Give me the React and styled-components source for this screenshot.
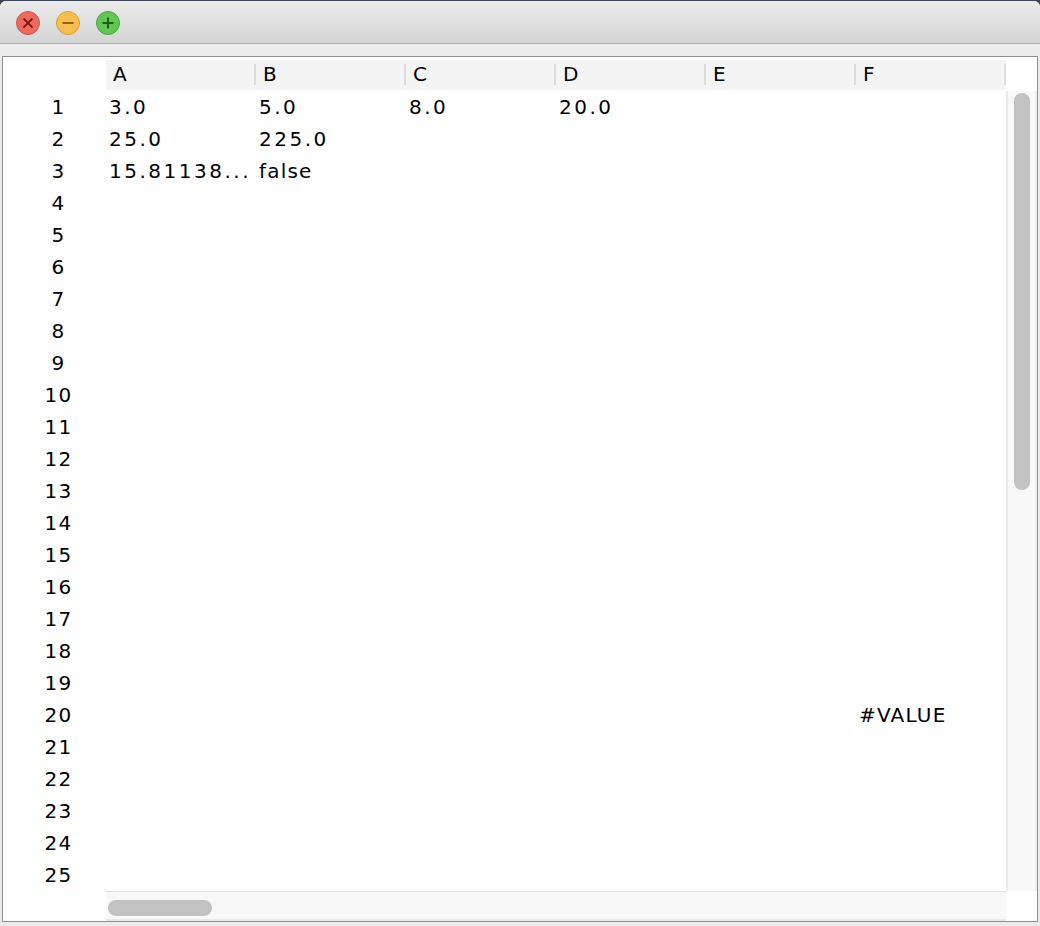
import React from "react";
import styled, { createGlobalStyle } from "styled-components";

const GlobalStyle = createGlobalStyle`
  html, body { margin: 0; padding: 0; }
  body {
    background: #3a4658;
    font-family: "DejaVu Sans", "Liberation Sans", sans-serif;
    color: #000;
  }
  * { box-sizing: border-box; }
`;

const Desktop = styled.div`
  width: 1040px;
  height: 926px;
  padding-top: 1px;
  overflow: hidden;
`;

const Window = styled.div`
  width: 1040px;
  height: 925px;
  background: #ececec;
  border-radius: 6px 6px 0 0;
  display: flex;
  flex-direction: column;
  overflow: hidden;
`;

const TitleBar = styled.div`
  height: 43px;
  flex: none;
  display: flex;
  align-items: center;
  gap: 16px;
  padding-left: 16px;
  padding-top: 2px;
  background: linear-gradient(#ebebeb, #d4d4d4);
  border-bottom: 1px solid #adadad;
`;

const LightButton = styled.span`
  width: 24px;
  height: 24px;
  display: flex;
  align-items: center;
  justify-content: center;
  border-radius: 50%;
  background: ${(p) => p.$fill};
  border: 1px solid ${(p) => p.$ring};
`;

const Band = styled.div`
  flex: 1;
  padding: 12px 2px 4px 2px;
  display: flex;
`;

const ContentBox = styled.div`
  flex: 1;
  background: #fff;
  border: 1px solid #8e8e8e;
  display: flex;
  flex-direction: column;
`;

const HeaderRow = styled.div`
  margin-top: 3px;
  height: 30px;
  display: flex;
`;

const Corner = styled.div`
  width: ${(p) => p.$w}px;
  flex: none;
  background: #fff;
`;

const HeaderCell = styled.div`
  position: relative;
  width: 150px;
  flex: none;
  background: #f4f4f4;
  padding-left: 7px;
  font-size: 20px;
  line-height: 28px;
  color: #000;
  &::after {
    content: "";
    position: absolute;
    right: 0;
    top: 4px;
    bottom: 5px;
    width: 2px;
    background: #dcdcdc;
  }
`;

const Body = styled.div`
  margin-top: 1px;
  height: 800px;
  display: flex;
`;

const RowHeaders = styled.div`
  width: 103px;
  flex: none;
  display: flex;
  flex-direction: column;
`;

const RowNum = styled.div`
  height: 32px;
  line-height: 32px;
  font-size: 20px;
  letter-spacing: 1.2px;
  text-align: center;
  padding-left: 8px;
  color: #000;
`;

const Grid = styled.div`
  width: 900px;
  flex: none;
  display: flex;
  flex-direction: column;
`;

const GridRow = styled.div`
  height: 32px;
  display: flex;
`;

const Cell = styled.div`
  width: 150px;
  flex: none;
  height: 32px;
  line-height: 32px;
  padding-left: 3px;
  font-size: 20px;
  white-space: nowrap;
  overflow: hidden;
  letter-spacing: ${(p) => (p.$numeric ? "2.5px" : "1.2px")};
  color: #000;
`;

const VTrack = styled.div`
  flex: 1;
  background: #f8f8f8;
  border-left: 2px solid #ebebeb;
  border-right: 2px solid #efefef;
  padding: 2px 0 0 6px;
`;

const VThumb = styled.div`
  width: 16px;
  height: 397px;
  border-radius: 8px;
  background: #c2c2c2;
`;

const HRow = styled.div`
  height: 30px;
  display: flex;
`;

const HTrack = styled.div`
  width: 900px;
  flex: none;
  background: #f8f8f8;
  border-top: 1px solid #e3e3e3;
  border-bottom: 2px solid #ebebeb;
  padding: 8px 0 0 2px;
`;

const HThumb = styled.div`
  width: 104px;
  height: 16px;
  border-radius: 8px;
  background: #c2c2c2;
`;

const columns = ["A", "B", "C", "D", "E", "F"];
const data = {
  1: { A: "3.0", B: "5.0", C: "8.0", D: "20.0" },
  2: { A: "25.0", B: "225.0" },
  3: { A: "15.81138...", B: "false" },
  20: { F: "#VALUE" },
};

const isNumeric = (v) => /^[0-9.]+$/.test(v);

function Lights() {
  return (
    <>
      <LightButton $fill="#ee6a5f" $ring="#d1554b">
        <svg width="12" height="12" viewBox="0 0 12 12">
          <path d="M2 2 L10 10 M10 2 L2 10" stroke="#7c1a12" strokeWidth="1.8" strokeLinecap="round" />
        </svg>
      </LightButton>
      <LightButton $fill="#f6be4f" $ring="#dca038">
        <svg width="14" height="14" viewBox="0 0 14 14">
          <path d="M1.5 7 H12.5" stroke="#98600c" strokeWidth="2" />
        </svg>
      </LightButton>
      <LightButton $fill="#62c554" $ring="#48a93b">
        <svg width="14" height="14" viewBox="0 0 14 14">
          <path d="M1.5 7 H12.5 M7 1.5 V12.5" stroke="#1a6210" strokeWidth="2" />
        </svg>
      </LightButton>
    </>
  );
}

export default function App() {
  const rows = Array.from({ length: 25 }, (_, i) => i + 1);
  return (
    <>
      <GlobalStyle />
      <Desktop>
        <Window>
          <TitleBar>
            <Lights />
          </TitleBar>
          <Band>
            <ContentBox>
              <HeaderRow>
                <Corner $w={103} />
                {columns.map((c) => (
                  <HeaderCell key={c}>{c}</HeaderCell>
                ))}
                <Corner $w={31} />
              </HeaderRow>
              <Body>
                <RowHeaders>
                  {rows.map((r) => (
                    <RowNum key={r}>{r}</RowNum>
                  ))}
                </RowHeaders>
                <Grid>
                  {rows.map((r) => (
                    <GridRow key={r}>
                      {columns.map((c) => {
                        const v = (data[r] && data[r][c]) || "";
                        return (
                          <Cell key={c} $numeric={isNumeric(v)}>
                            {v}
                          </Cell>
                        );
                      })}
                    </GridRow>
                  ))}
                </Grid>
                <VTrack>
                  <VThumb />
                </VTrack>
              </Body>
              <HRow>
                <Corner $w={103} />
                <HTrack>
                  <HThumb />
                </HTrack>
                <Corner $w={31} />
              </HRow>
            </ContentBox>
          </Band>
        </Window>
      </Desktop>
    </>
  );
}
